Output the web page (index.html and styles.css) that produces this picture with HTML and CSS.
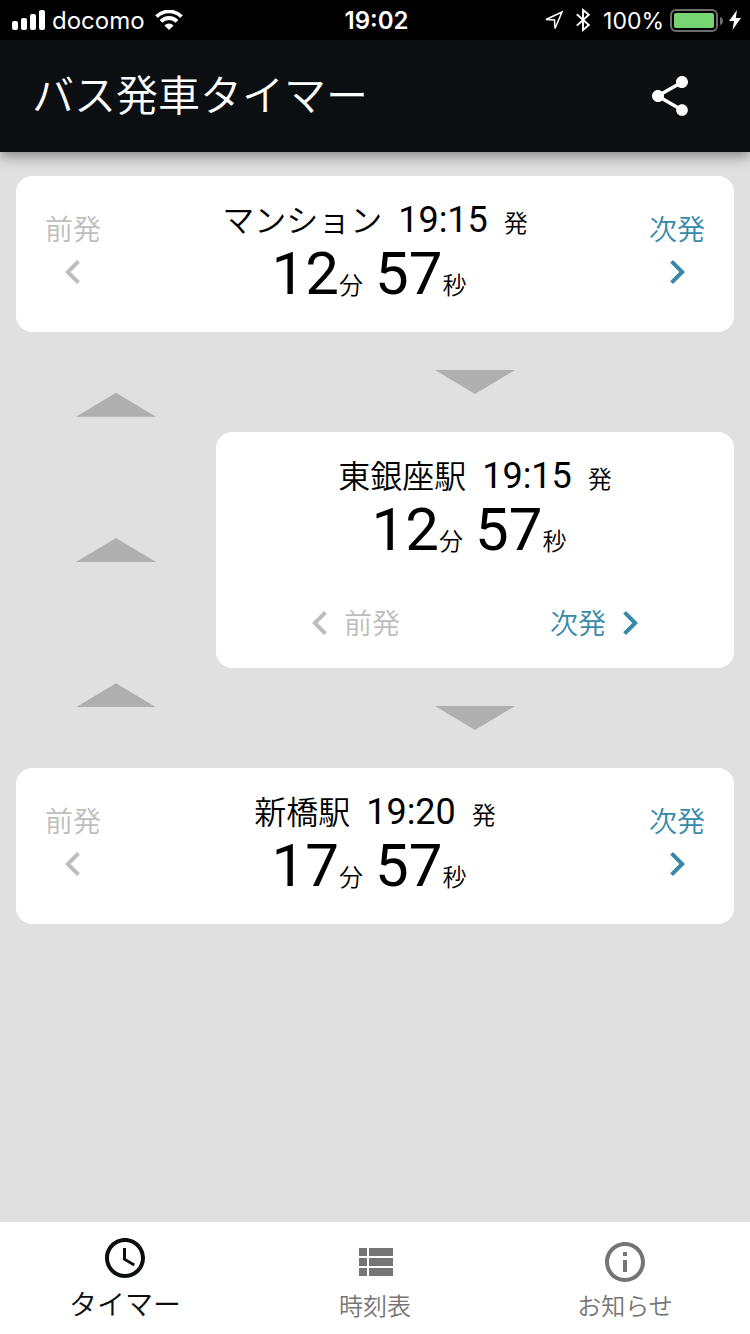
FILE: index.html
```html
<!DOCTYPE html>
<html lang="ja">
<head>
<meta charset="utf-8">
<meta name="viewport" content="width=device-width, initial-scale=1">
<title>バス発車タイマー</title>
<link rel="stylesheet" href="styles.css">
</head>
<body>
<div class="app">
  <div class="status">
    <div class="status-side">
      <svg class="signal" width="34" height="20" viewBox="0 0 34 20" fill="#fff" aria-hidden="true">
        <rect x="0" y="11" width="6" height="9" rx="2"/><rect x="9" y="8" width="6" height="12" rx="2"/><rect x="18" y="4" width="6" height="16" rx="2"/><rect x="27" y="0" width="6" height="20" rx="2"/>
      </svg>
      <span class="carrier">docomo</span>
      <svg class="wifi" width="28" height="20" viewBox="0 0 28 20" aria-hidden="true">
        <path d="M1.5 6.6a17.8 17.8 0 0 1 25 0M6 11.3a11.4 11.4 0 0 1 16 0" fill="none" stroke="#fff" stroke-width="3.8"/>
        <path d="M14 20l-4.6-4.6a6.500 6.500 0 0 1 9.200 0z" fill="#fff"/>
      </svg>
    </div>
    <span class="clock">19:02</span>
    <div class="status-side status-right">
      <svg class="location" width="20" height="20" viewBox="0 0 20 20" fill="none" stroke="#fff" stroke-width="1.500" aria-hidden="true"><path d="M18 2L2 9.500l8.500.4.500 8.600z"/></svg>
      <svg class="bluetooth" width="14" height="24" viewBox="0 0 14 24" fill="none" stroke="#fff" stroke-width="1.900" aria-hidden="true"><path d="M.8 6.200l12 10.800L7 22V2l5.800 4.800-12 10.800"/></svg>
      <span class="percent">100%</span>
      <svg class="battery" width="54" height="24" viewBox="0 0 54 24" aria-hidden="true">
        <rect x="1" y="2" width="46" height="21" rx="5" fill="none" stroke="#6e6e6e" stroke-width="2"/>
        <rect x="4" y="5" width="40" height="15" rx="2" fill="#77d671"/>
        <path d="M50 9c4 1 4 7 0 8z" fill="#6e6e6e"/>
      </svg>
      <svg class="bolt" width="12" height="20" viewBox="0 0 12 20" fill="#fff" aria-hidden="true"><path d="M8 0L0 11h5L3.500 20 12 8H6.800z"/></svg>
    </div>
  </div>

  <header class="appbar">
    <h1 class="title">バス発車タイマー</h1>
    <button class="icon-button" type="button" aria-label="共有">
      <svg class="icon" viewBox="0 0 24 24"><path d="M18 16.080c-.76 0-1.440.3-1.960.77L8.910 12.700c.05-.23.09-.46.09-.7s-.04-.47-.09-.7l7.050-4.110c.54.5 1.250.81 2.040.81 1.660 0 3-1.340 3-3s-1.340-3-3-3-3 1.340-3 3c0 .24.04.47.09.7L8.040 9.810C7.500 9.310 6.790 9 6 9c-1.660 0-3 1.340-3 3s1.340 3 3 3c.79 0 1.500-.31 2.040-.81l7.120 4.160c-.05.21-.08.43-.08.65 0 1.610 1.310 2.920 2.920 2.920s2.920-1.310 2.920-2.920-1.310-2.920-2.920-2.920z"/></svg>
    </button>
  </header>

  <main class="main">
    <section class="card card-wide">
      <button class="step step-stack" type="button" disabled><span class="step-label">前発</span><svg class="icon" viewBox="0 0 24 24"><path d="M15.410 7.410L14 6l-6 6 6 6 1.410-1.410L10.830 12z"/></svg></button>
      <div class="departure">
        <div class="stop"><span class="name">マンション</span><span class="time">19:15</span><span class="unit">発</span></div>
        <div class="countdown"><span class="value">12</span><span class="unit">分</span><span class="value">57</span><span class="unit">秒</span></div>
      </div>
      <button class="step step-stack" type="button"><span class="step-label">次発</span><svg class="icon" viewBox="0 0 24 24"><path d="M10 6L8.590 7.410 13.170 12l-4.580 4.590L10 18l6-6z"/></svg></button>
    </section>

    <div class="route">
      <div class="lane">
        <span class="arrow arrow-up"></span>
        <span class="arrow arrow-up"></span>
        <span class="arrow arrow-up"></span>
      </div>
      <div class="branch">
        <div class="gap"><span class="arrow"></span></div>
        <section class="card card-branch">
          <div class="departure">
            <div class="stop"><span class="name">東銀座駅</span><span class="time">19:15</span><span class="unit">発</span></div>
            <div class="countdown"><span class="value">12</span><span class="unit">分</span><span class="value">57</span><span class="unit">秒</span></div>
          </div>
          <div class="steps">
            <button class="step" type="button" disabled><svg class="icon" viewBox="0 0 24 24"><path d="M15.410 7.410L14 6l-6 6 6 6 1.410-1.410L10.830 12z"/></svg><span class="step-label">前発</span></button>
            <button class="step" type="button"><span class="step-label">次発</span><svg class="icon" viewBox="0 0 24 24"><path d="M10 6L8.590 7.410 13.170 12l-4.580 4.590L10 18l6-6z"/></svg></button>
          </div>
        </section>
        <div class="gap"><span class="arrow"></span></div>
      </div>
    </div>

    <section class="card card-wide">
      <button class="step step-stack" type="button" disabled><span class="step-label">前発</span><svg class="icon" viewBox="0 0 24 24"><path d="M15.410 7.410L14 6l-6 6 6 6 1.410-1.410L10.830 12z"/></svg></button>
      <div class="departure">
        <div class="stop"><span class="name">新橋駅</span><span class="time">19:20</span><span class="unit">発</span></div>
        <div class="countdown"><span class="value">17</span><span class="unit">分</span><span class="value">57</span><span class="unit">秒</span></div>
      </div>
      <button class="step step-stack" type="button"><span class="step-label">次発</span><svg class="icon" viewBox="0 0 24 24"><path d="M10 6L8.590 7.410 13.170 12l-4.580 4.590L10 18l6-6z"/></svg></button>
    </section>
  </main>

  <nav class="tabs">
    <button class="tab tab-active" type="button" aria-current="page">
      <svg class="icon" viewBox="0 0 24 24"><path d="M11.990 2C6.470 2 2 6.480 2 12s4.470 10 9.990 10C17.520 22 22 17.520 22 12S17.520 2 11.990 2zM12 20c-4.420 0-8-3.580-8-8s3.580-8 8-8 8 3.580 8 8-3.580 8-8 8z"/><path d="M12.500 7H11v6l5.250 3.150.75-1.230-4.500-2.670z"/></svg>
      <span class="tab-label">タイマー</span>
    </button>
    <button class="tab" type="button">
      <svg class="icon" viewBox="0 0 24 24"><path d="M4 14h4v-4H4v4zm0 5h4v-4H4v4zM4 9h4V5H4v4zm5 5h12v-4H9v4zm0 5h12v-4H9v4zM9 5v4h12V5H9z"/></svg>
      <span class="tab-label">時刻表</span>
    </button>
    <button class="tab" type="button">
      <svg class="icon" viewBox="0 0 24 24"><path d="M11 17h2v-6h-2v6zm1-15C6.480 2 2 6.480 2 12s4.480 10 10 10 10-4.480 10-10S17.520 2 12 2zm0 18c-4.410 0-8-3.590-8-8s3.590-8 8-8 8 3.590 8 8-3.590 8-8 8zM11 9h2V7h-2v2z"/></svg>
      <span class="tab-label">お知らせ</span>
    </button>
  </nav>
</div>
</body>
</html>
```
FILE: styles.css
```css
*, *::before, *::after { box-sizing: border-box; }

body {
  margin: 0;
  background: #e0e0e0;
  color: #000;
  font-family: Roboto, "Noto Sans CJK JP", sans-serif;
}

button {
  margin: 0;
  padding: 0;
  border: 0;
  background: none;
  color: inherit;
  font: inherit;
}

.icon {
  display: block;
  flex: none;
  width: 48px;
  height: 48px;
  fill: currentColor;
}

.app {
  display: flex;
  flex-direction: column;
  min-height: 100vh;
}

/* Status bar */
.status {
  display: grid;
  grid-template-columns: 1fr auto 1fr;
  align-items: center;
  height: 40px;
  padding: 0 9px 0 12px;
  background: #000;
  color: #fff;
  font-family: Inter, sans-serif;
  font-size: 24px;
  line-height: 40px;
}

.status-side { display: flex; align-items: center; }
.status-right { justify-content: flex-end; }
.status svg { flex: none; }
.carrier, .clock, .percent { padding-top: 2px; line-height: 38px; }
.carrier { margin-left: 6px; }
.wifi { margin-left: 10px; }
.clock { font-weight: 600; }
.bluetooth { margin: 0 13px 0 12px; }
.percent { font-size: 23px; }
.battery { margin: 0 5px 0 6px; }

/* App bar */
.appbar {
  display: flex;
  align-items: center;
  justify-content: space-between;
  height: 112px;
  padding: 0 32px;
  background: #0b0f12;
  color: #fff;
  box-shadow: 0 4px 8px -2px rgba(0, 0, 0, .2), 0 8px 10px rgba(0, 0, 0, .14), 0 2px 20px rgba(0, 0, 0, .12);
}

.title {
  margin: 0;
  padding-bottom: 6px;
  font-family: "Noto Sans CJK JP", sans-serif;
  font-size: 42px;
  font-weight: 350;
  line-height: 56px;
}

.icon-button { padding: 24px; }

/* Timetable cards */
.main { flex: 1; padding: 24px 16px; }

.card { border-radius: 16px; background: #fff; }

.card-wide {
  display: grid;
  grid-template-columns: 114px 1fr 114px;
}

.departure { padding: 20px 0 26px; }

.stop, .countdown {
  display: flex;
  align-items: baseline;
  justify-content: center;
}

.name, .unit, .step-label, .tab-label {
  font-family: "Noto Sans CJK JP", sans-serif;
  font-weight: 350;
}

.stop { gap: 16px; line-height: 44px; }
.name { font-size: 32px; }
.time { font-size: 36px; }
.unit { font-size: 24px; line-height: 24px; }
.countdown { line-height: 64px; }
.countdown .unit { margin-right: 12px; }
.value { font-size: 60px; }

.step {
  display: flex;
  align-items: center;
  color: #3689a8;
  font-size: 28px;
}

.step:disabled { color: #bdbdbd; }
.step-label { padding-bottom: 2px; line-height: 36px; }

.step-stack {
  flex-direction: column;
  justify-content: center;
  padding-bottom: 2px;
}

.card-branch { padding-bottom: 17px; }
.card-branch .departure { padding-bottom: 33px; }

.steps {
  display: flex;
  justify-content: center;
  gap: 150px;
}

.steps .step { height: 56px; }

/* Route between the stops */
.route { display: grid; grid-template-columns: 200px 1fr; }

.lane {
  display: flex;
  flex-direction: column;
  align-items: center;
  justify-content: space-around;
}

.gap {
  display: flex;
  align-items: center;
  justify-content: center;
  height: 100px;
}

.arrow {
  width: 80px;
  height: 24px;
  background: #afafaf;
  clip-path: polygon(0 0, 100% 0, 50% 100%);
}

.arrow-up { clip-path: polygon(50% 0, 100% 100%, 0 100%); }

/* Bottom navigation */
.tabs {
  display: grid;
  grid-template-columns: repeat(3, 1fr);
  height: 112px;
  background: #fff;
}

.tab {
  display: flex;
  flex-direction: column;
  align-items: center;
  padding-top: 16px;
  color: #757575;
  font-size: 24px;
  line-height: 38px;
}

.tab-active {
  padding-top: 12px;
  color: #0b0f12;
  font-size: 28px;
  line-height: 42px;
}
```
